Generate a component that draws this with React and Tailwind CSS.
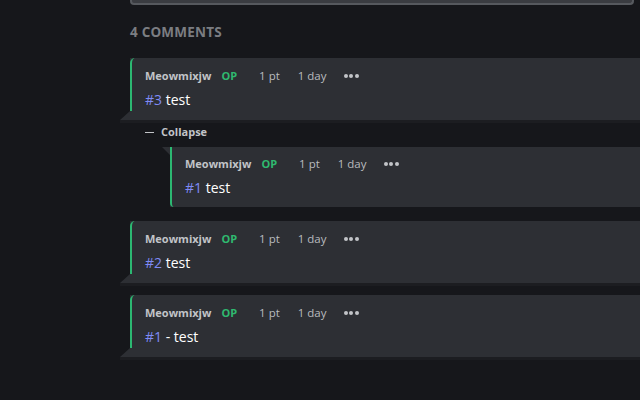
const comments = [
  { id: 1, num: "#3", text: "test", reply: { num: "#1", text: "test" } },
  { id: 2, num: "#2", text: "test" },
  { id: 3, num: "#1", text: "- test" },
];

function Meta() {
  return (
    <div className="flex items-center h-[18px] text-[11px] leading-[18px]">
      <span className="font-bold text-[#c2c4c8]">Meowmixjw</span>
      <span className="ml-[10px] font-bold text-[#2fb96f]">OP</span>
      <span className="ml-[22px] text-[#b9bbbf] text-[11.5px]">1 pt</span>
      <span className="ml-[18px] text-[#b9bbbf] text-[11.5px]">1 day</span>
      <span className="ml-[17px] flex gap-[1.5px] items-center">
        <span className="w-[4px] h-[4px] rounded-full bg-[#c2c4c8]" />
        <span className="w-[4px] h-[4px] rounded-full bg-[#c2c4c8]" />
        <span className="w-[4px] h-[4px] rounded-full bg-[#c2c4c8]" />
      </span>
    </div>
  );
}

function Body({ num, text }) {
  return (
    <div className="mt-[5px] text-[14px] leading-[20px]">
      <span className="text-[#7f8bf5]">{num}</span>{" "}
      <span className="text-white">{text}</span>
    </div>
  );
}

function Card({ num, text }) {
  return (
    <div className="ml-[120px] bg-[#2d2f34] pb-[9px] shadow-[0_3px_0_#1c1d21] [clip-path:polygon(10px_0,100%_0,100%_calc(100%+4px),0_calc(100%+4px),0_100%,10px_calc(100%-9px))]">
      <div className="ml-[10px] border-l-2 border-[#2cb872] rounded-tl-[5px] pl-[13px] pt-[9px] pb-[1px]">
        <Meta />
        <Body num={num} text={text} />
      </div>
    </div>
  );
}

function Reply({ num, text }) {
  return (
    <div className="ml-[162px] bg-[#2d2f34] [clip-path:polygon(0_0,100%_0,100%_100%,8px_100%,8px_8px)]">
      <div className="ml-[8px] border-l-2 border-[#2cb872] rounded-bl-[4px] pl-[13px] pt-[8px] pb-[9px] mb-[2px]">
        <Meta />
        <Body num={num} text={text} />
      </div>
    </div>
  );
}

export default function App() {
  return (
    <div
      className="w-[640px] h-[400px] overflow-hidden bg-[#16171b]"
      style={{ fontFamily: '"Open Sans", "Noto Sans", sans-serif' }}
    >
      <div className="ml-[130px] mr-[6px] h-[5px] bg-[#3a3c41] border-b-2 border-x-2 border-[#56595e] rounded-b-[4px]" />
      <div className="ml-[130px] mt-[18px] text-[13.5px] font-bold leading-[18px] text-[#7b7d82] tracking-[0.2px]">
        4 COMMENTS
      </div>
      <div className="mt-[17px] flex flex-col">
        {comments.map((c) => (
          <div key={c.id} className="mb-[12px]">
            <Card num={c.num} text={c.text} />
            {c.reply && (
              <div>
                <div className="ml-[145px] h-[27px] pb-[3px] flex items-center text-[11px] font-bold text-[#c2c4c8]">
                  <span className="w-[9px] h-[1px] bg-[#c2c4c8]" />
                  <span className="ml-[7px]">Collapse</span>
                </div>
                <Reply num={c.reply.num} text={c.reply.text} />
              </div>
            )}
          </div>
        ))}
      </div>
    </div>
  );
}
